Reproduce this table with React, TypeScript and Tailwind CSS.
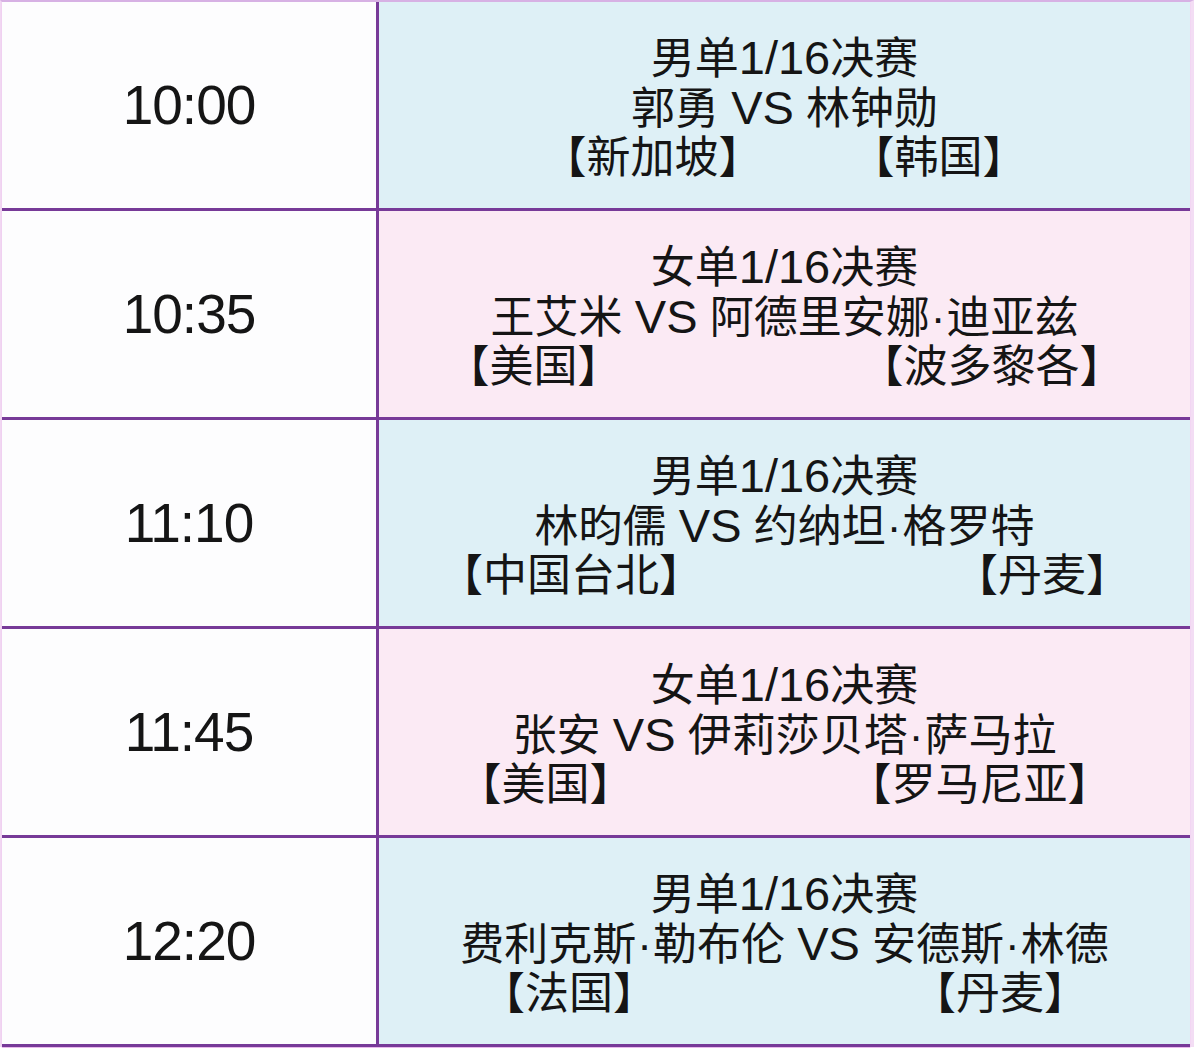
import React from "react";

type Row = {
  time: string;
  title: string;
  match: string;
  left: string;
  right: string;
  gap: string;
  bg: string;
};

const rows: Row[] = [
  { time: "10:00", title: "男单1/16决赛", match: "郭勇 VS 林钟勋", left: "新加坡", right: "韩国", gap: "gap-[88px]", bg: "bg-[#def0f6]" },
  { time: "10:35", title: "女单1/16决赛", match: "王艾米 VS 阿德里安娜·迪亚兹", left: "美国", right: "波多黎各", gap: "gap-[238px]", bg: "bg-[#fbeaf4]" },
  { time: "11:10", title: "男单1/16决赛", match: "林昀儒 VS 约纳坦·格罗特", left: "中国台北", right: "丹麦", gap: "gap-[251px]", bg: "bg-[#def0f6]" },
  { time: "11:45", title: "女单1/16决赛", match: "张安 VS 伊莉莎贝塔·萨马拉", left: "美国", right: "罗马尼亚", gap: "gap-[214px]", bg: "bg-[#fbeaf4]" },
  { time: "12:20", title: "男单1/16决赛", match: "费利克斯·勒布伦 VS 安德斯·林德", left: "法国", right: "丹麦", gap: "gap-[255px]", bg: "bg-[#def0f6]" },
];

function Mixed({ text }: { text: string }) {
  const parts = text.split(/([A-Za-z0-9/]+|·)/);
  return (
    <>
      {parts.map((p, i) =>
        p === "·" ? (
          <span key={i} className="px-[1px]">
            {p}
          </span>
        ) : /^[A-Za-z0-9/]+$/.test(p) ? (
          <span key={i} className="text-[47px]">
            {p}
          </span>
        ) : (
          <span key={i}>{p}</span>
        )
      )}
    </>
  );
}

export default function App() {
  return (
    <div className="w-[1196px] h-[1048px] bg-white font-['Liberation_Sans','Noto_Sans_CJK_SC',sans-serif] text-[#151515]">
      <div className="border-t-2 border-l-2 border-r-[4px] border-t-[#d7b1e4] border-l-[#f1d7f2] border-r-[#f3ddf4] mr-[2px]">
        {rows.map((r, i) => (
          <div
            key={i}
            className="flex h-[209px] border-b-[3px] border-[#773a98] shadow-[0_1px_1px_#e9b8ec]"
          >
            <div className="w-[377px] shrink-0 flex items-center justify-center bg-[#fdfdfe] border-r-[3px] border-[#773a98]">
              <span className="text-[55px] leading-none font-['Liberation_Sans',sans-serif] tracking-[-1px]">
                {r.time}
              </span>
            </div>
            <div className={`flex-1 flex flex-col items-center justify-center pt-[4px] ${r.bg}`}>
              <div className="text-[44px] leading-[49px] whitespace-nowrap">
                <Mixed text={r.title} />
              </div>
              <div className="text-[44px] leading-[49px] whitespace-nowrap">
                <Mixed text={r.match} />
              </div>
              <div className={`flex justify-center text-[44px] leading-[49px] whitespace-nowrap ${r.gap}`}>
                <span>【{r.left}】</span>
                <span>【{r.right}】</span>
              </div>
            </div>
          </div>
        ))}
      </div>
    </div>
  );
}
